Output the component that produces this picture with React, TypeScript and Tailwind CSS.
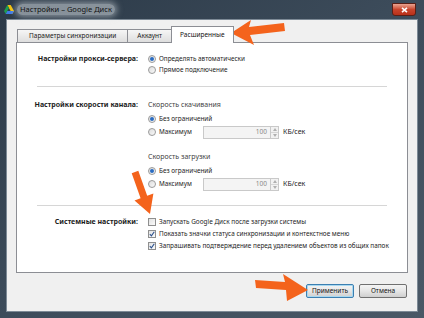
import React from "react";

const font = "font-['Noto_Sans','DejaVu_Sans',sans-serif]";

function Radio({ checked }: { checked?: boolean }) {
  return (
    <span className="flex h-[8px] w-[8px] shrink-0 items-center justify-center rounded-full border border-[#9a9a9a] bg-gradient-to-br from-[#dcdcdc] to-[#fafafa]">
      {checked ? <span className="h-[4px] w-[4px] rounded-full bg-[#2a6cc2]" /> : null}
    </span>
  );
}

function Checkbox({ checked }: { checked?: boolean }) {
  return (
    <span className="flex h-[8px] w-[8px] shrink-0 items-center justify-center border border-[#8f8f8f] bg-gradient-to-br from-[#e2e2e2] to-[#fbfbfb]">
      {checked ? (
        <svg width="6" height="6" viewBox="0 0 6 6">
          <path d="M0.8 3.2 L2.4 4.8 L5.3 0.8" fill="none" stroke="#2b4f8c" strokeWidth="1.1" />
        </svg>
      ) : null}
    </span>
  );
}

function SpeedInput() {
  return (
    <div className="flex items-center">
      <div className="flex h-[13px] w-[68px] items-center justify-end border border-[#c9c9c9] bg-[#f4f4f4] pr-[3px] text-[6.5px] text-[#8a8a8a]">
        100
      </div>
      <div className="flex h-[13px] w-[8px] flex-col border border-l-0 border-[#c9c9c9] bg-[#f2f2f2]">
        <div className="flex flex-1 items-center justify-center border-b border-[#d6d6d6]">
          <svg width="4" height="3" viewBox="0 0 4 3">
            <path d="M0 3 L2 0 L4 3 Z" fill="#b0b0b0" />
          </svg>
        </div>
        <div className="flex flex-1 items-center justify-center">
          <svg width="4" height="3" viewBox="0 0 4 3">
            <path d="M0 0 L2 3 L4 0 Z" fill="#b0b0b0" />
          </svg>
        </div>
      </div>
      <span className="ml-[4px] text-[7px] text-[#222]">КБ/сек</span>
    </div>
  );
}

function SpeedBlock({ title }: { title: string }) {
  return (
    <div className="flex flex-col">
      <div className="flex h-[13px] items-center text-[7px] text-[#444]">{title}</div>
      <div className="flex h-[13px] items-center gap-[3px]">
        <Radio checked />
        <span>Без ограничений</span>
      </div>
      <div className="flex h-[14px] items-center gap-[3px]">
        <Radio />
        <span className="w-[41px]">Максимум</span>
        <SpeedInput />
      </div>
    </div>
  );
}

function Tab({ label, active, pad }: { label: string; active?: boolean; pad: string }) {
  return active ? (
    <div className={`relative z-10 -mb-px -mt-[2px] flex h-[17px] items-center border border-b-0 border-[#8c8e94] bg-white text-[6.5px] text-[#111] ${pad}`}>
      {label}
    </div>
  ) : (
    <div className={`flex h-[13px] items-center border border-b-0 border-r-0 border-[#8c8e94] bg-gradient-to-b from-[#f6f6f6] to-[#dedede] text-[6.5px] text-[#222] first:border-l ${pad}`}>
      {label}
    </div>
  );
}

function WinButton({ label, focused }: { label: string; focused?: boolean }) {
  return (
    <button
      className={`flex h-[14px] w-[48px] items-center justify-center rounded-[2px] border bg-gradient-to-b from-[#f4f4f4] via-[#e6e6e6] to-[#cfcfcf] text-[6.5px] text-[#111] ${
        focused ? "border-[#3c7fb1] shadow-[inset_0_0_0_1px_#a8d8f0]" : "border-[#707070]"
      }`}
    >
      {label}
    </button>
  );
}

export default function App() {
  return (
    <div className={`relative h-[318px] w-[424px] overflow-hidden bg-gradient-to-br from-[#2c3a48] via-[#3d4c5b] to-[#4a5866] ${font}`}>
      {/* title bar */}
      <div className="flex h-[19px] items-center px-[4px]">
        <svg width="10" height="9" viewBox="0 0 10 9" className="shrink-0">
          <path d="M3.3 0 L6.7 0 L10 6 L8.3 9 Z" fill="#f4c20d" />
          <path d="M3.3 0 L5 3 L1.7 9 L0 6 Z" fill="#1e9c4f" />
          <path d="M1.7 9 L8.3 9 L10 6 L3.4 6 Z" fill="#3f7be8" />
        </svg>
        <span className="ml-[3px] rounded-[8px] bg-[#dfe5ea]/50 px-[3px] text-[7.5px] text-[#111] shadow-[0_0_6px_2px_rgba(223,229,234,0.5)]">
          Настройки – Google Диск
        </span>
        <div className="ml-auto mr-[4px] flex h-[13px] w-[24px] items-center justify-center rounded-b-[3px] border border-[#5a1f16] bg-gradient-to-b from-[#e9a391] via-[#c8442c] to-[#b8301a]">
          <svg width="7" height="6" viewBox="0 0 7 6">
            <path d="M1 0.8 L6 5.2 M6 0.8 L1 5.2" stroke="#fff" strokeWidth="1.6" />
          </svg>
        </div>
      </div>

      {/* client area */}
      <div className="mx-[6px] flex h-[293px] flex-col border border-[#7d8a96] bg-[#f0f0f0] px-[9px] pt-[8px] text-[#1c1c1c]">
        <div className="ml-[1px] flex items-end">
          <Tab label="Параметры синхронизации" pad="px-[11px]" />
          <Tab label="Аккаунт" pad="px-[9px]" />
          <Tab label="Расширенные" active pad="px-[8px]" />
        </div>

        <div className="flex h-[231px] flex-col border border-[#8c8e94] bg-white text-[6.4px]">
          {/* proxy */}
          <div className="flex pt-[10px]">
            <div className="flex h-[12px] w-[121px] items-center justify-end font-bold text-[7px]">
              Настройки прокси-сервера:
            </div>
            <div className="ml-[10px] flex flex-col">
              <div className="flex h-[11px] items-center gap-[3px]">
                <Radio checked />
                <span>Определять автоматически</span>
              </div>
              <div className="flex h-[11px] items-center gap-[3px]">
                <Radio />
                <span>Прямое подключение</span>
              </div>
            </div>
          </div>

          <div className="mx-[20px] mt-[11px] h-px bg-[#d6d6d6]" />

          {/* speed */}
          <div className="flex pt-[12px]">
            <div className="flex h-[13px] w-[121px] items-center justify-end font-bold text-[7px]">
              Настройки скорости канала:
            </div>
            <div className="ml-[10px] flex flex-col gap-[12px]">
              <SpeedBlock title="Скорость скачивания" />
              <SpeedBlock title="Скорость загрузки" />
            </div>
          </div>

          <div className="mx-[20px] mt-[14px] h-px bg-[#d6d6d6]" />

          {/* system */}
          <div className="flex pt-[10px]">
            <div className="flex h-[12px] w-[121px] items-center justify-end font-bold text-[7px]">
              Системные настройки:
            </div>
            <div className="ml-[10px] flex flex-col whitespace-nowrap">
              <div className="flex h-[12px] items-center gap-[3px]">
                <Checkbox />
                <span>Запускать Google Диск после загрузки системы</span>
              </div>
              <div className="flex h-[12px] items-center gap-[3px]">
                <Checkbox checked />
                <span>Показать значки статуса синхронизации и контекстное меню</span>
              </div>
              <div className="flex h-[12px] items-center gap-[3px]">
                <Checkbox checked />
                <span>Запрашивать подтверждение перед удалением объектов из общих папок</span>
              </div>
            </div>
          </div>
        </div>

        <div className="mt-[11px] flex justify-end gap-[5px] pr-[1px]">
          <WinButton label="Применить" focused />
          <WinButton label="Отмена" />
        </div>
      </div>

      {/* orange annotation arrows */}
      <svg className="pointer-events-none absolute inset-0" width="424" height="318" viewBox="0 0 424 318">
        <polygon points="231,33 251,20 249,27 284,23 285,31 250,35 254,45" fill="#f4631c" />
        <polygon
          points="131.7,173.2 138.3,170.8 147.2,195.8 153.4,193.6 150,214 134.5,200.4 140.6,198.2"
          fill="#f4631c"
        />
        <polygon points="255,280 285,282 283,274 308,290 287,301 286,290 256,288" fill="#f4631c" />
      </svg>
    </div>
  );
}
